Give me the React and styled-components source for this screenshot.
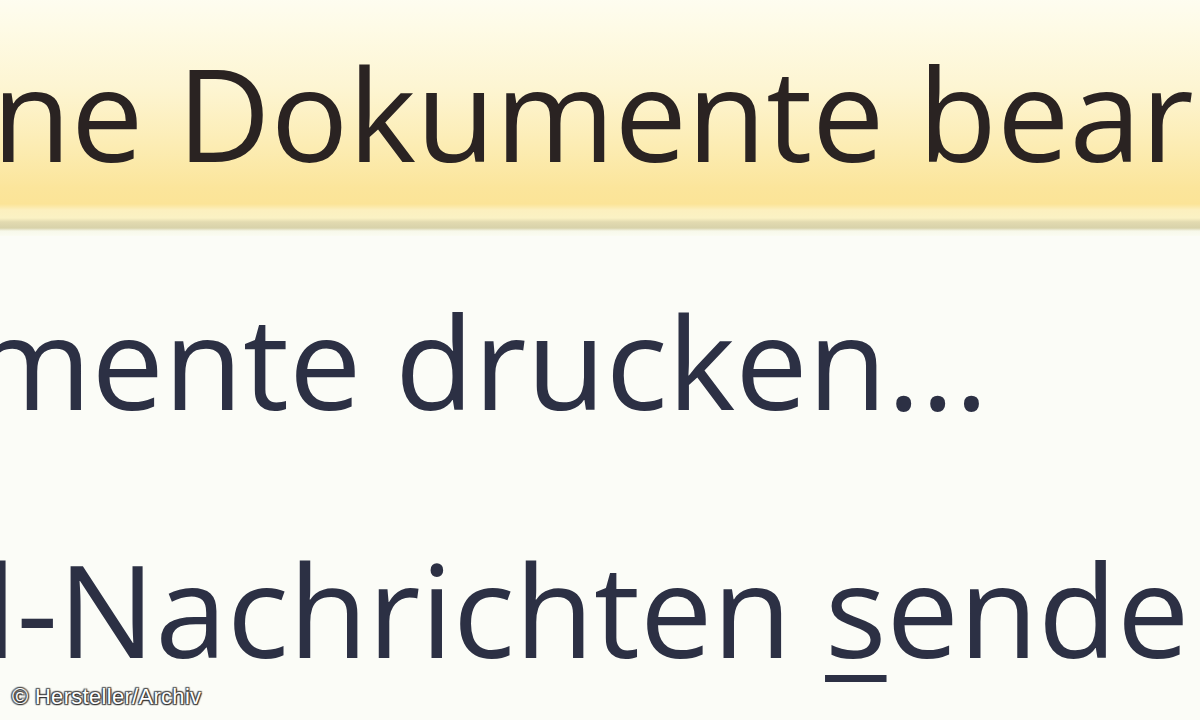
import styled, { createGlobalStyle } from 'styled-components';

const GlobalStyle = createGlobalStyle`
  html, body {
    margin: 0;
    padding: 0;
    background: #fbfcf7;
  }
  #root {
    width: 1200px;
    height: 720px;
  }
`;

const Screen = styled.div`
  position: relative;
  width: 1200px;
  height: 720px;
  overflow: hidden;
  background: #fbfcf7;
`;

const Menu = styled.ul`
  list-style: none;
  margin: -12px 0 0 0;
  padding: 0;
  display: flex;
  flex-direction: column;
`;

// Office-style hover band: pale top, warm yellow bottom, tan rule
const hoverBg = `linear-gradient(
  to bottom,
  #fefdf4 0px,
  #fefbe6 40px,
  #fdf5d2 100px,
  #fcecb2 160px,
  #fbe59b 200px,
  #fbe497 216px,
  #fcf0bf 222px,
  #fbf2c4 230px,
  #e2dab0 234px,
  #d8d2aa 240px,
  #f7f8ea 243px,
  #fafcf2 248px
)`;

const Item = styled.li`
  box-sizing: border-box;
  height: 248px;
  display: flex;
  align-items: center;
  white-space: nowrap;
  overflow: hidden;
  background: ${(p) => (p.$active ? hoverBg : 'transparent')};
`;

const Label = styled.span`
  display: block;
  font-family: 'Open Sans', 'Noto Sans', sans-serif;
  font-size: 129px;
  line-height: 1;
  color: ${(p) => (p.$active ? '#2a2322' : '#2c3044')};
  margin-left: ${(p) => p.$shift}px;
`;

const AccessKey = styled.span`
  text-decoration: underline;
  text-decoration-thickness: 7px;
  text-underline-offset: 17px;
`;

const Credit = styled.div`
  position: absolute;
  left: 12px;
  bottom: 12px;
  font-family: 'Liberation Sans', Arial, sans-serif;
  font-size: 22px;
  line-height: 1;
  letter-spacing: 0.3px;
  color: #ffffff;
  text-shadow:
    0 0 2px #2e2e2e,
    1px 1px 1px #333,
    -1px -1px 1px #555,
    1px -1px 1px #555,
    -1px 1px 1px #555;
`;

export default function App() {
  return (
    <>
      <GlobalStyle />
      <Screen>
        <Menu>
          <Item $active>
            <Label $active $shift={-8}>
              ne Dokumente bearbeiten
            </Label>
          </Item>
          <Item>
            <Label $shift={-28}>mente drucken...</Label>
          </Item>
          <Item>
            <Label $shift={-16}>
              l-Nachrichten <AccessKey>s</AccessKey>enden
            </Label>
          </Item>
        </Menu>
        <Credit>© Hersteller/Archiv</Credit>
      </Screen>
    </>
  );
}
